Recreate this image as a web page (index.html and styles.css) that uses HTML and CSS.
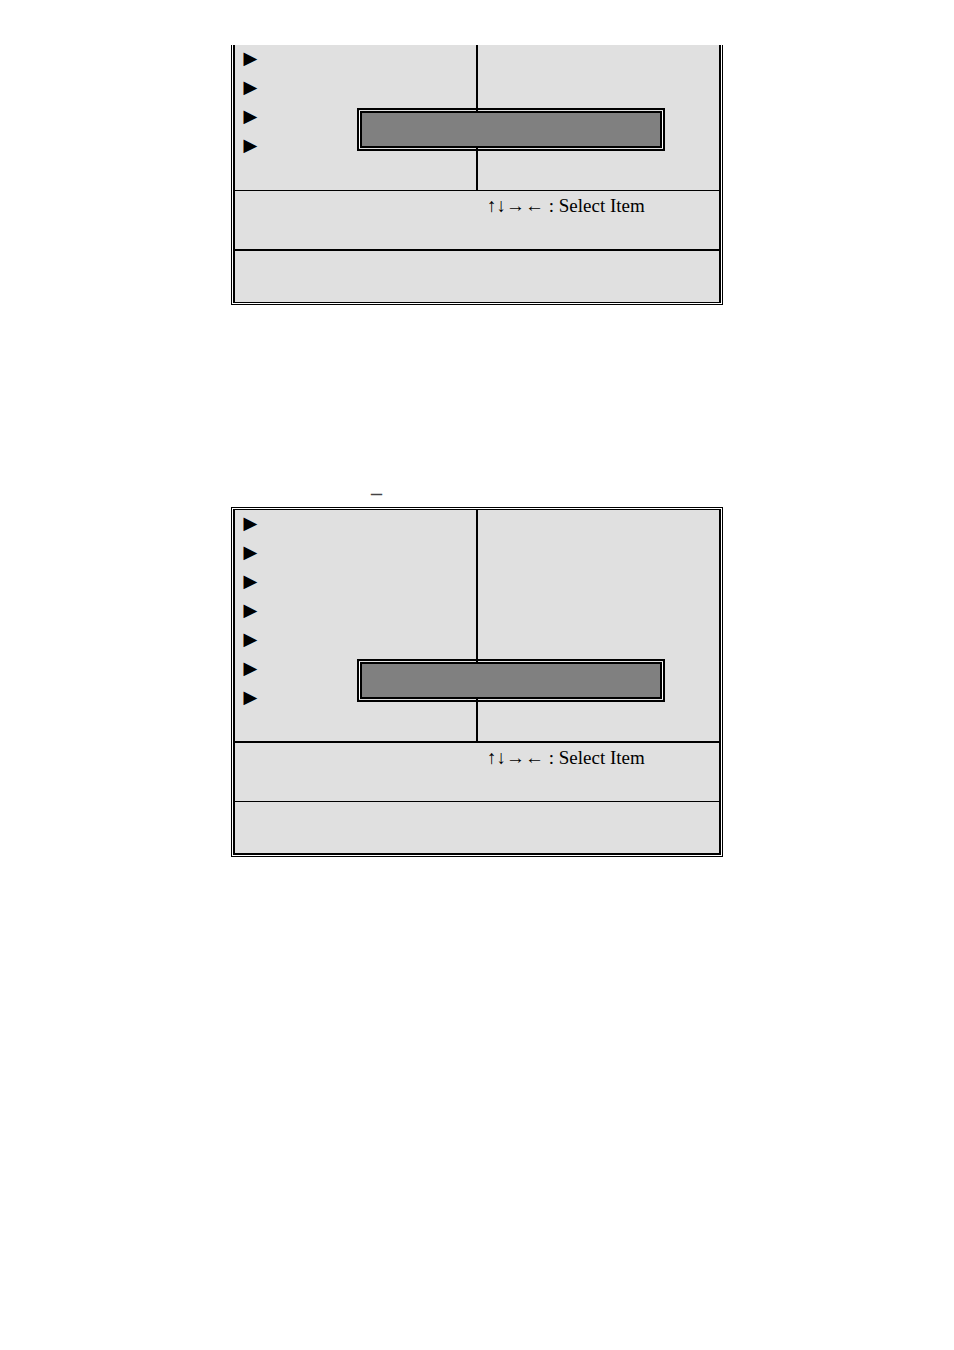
FILE: index.html
```
<!DOCTYPE html>
<html lang="en">
<head>
  <meta charset="UTF-8" />
  <meta name="viewport" content="width=device-width, initial-scale=1.0"/>
  <title>Setup Menu</title>
  <link rel="stylesheet" href="styles.css">
</head>
<body>

  <main class="page">

    <!-- End of the previous menu -->
    <section class="frame frame-continued">
      <div class="screen">
        <div class="menu">
          <ul class="menu-list">
            <li>►</li>
            <li>►</li>
            <li>►</li>
            <li>►</li>
          </ul>
          <div class="menu-side"></div>
          <div class="dialog"><div class="dialog-body"></div></div>
        </div>
        <div class="keys">
          <p>↑↓→← : Select Item</p>
        </div>
        <div class="footer thick"></div>
      </div>
    </section>

    <p class="caption">–</p>

    <section class="frame">
      <div class="screen">
        <div class="menu">
          <ul class="menu-list">
            <li>►</li>
            <li>►</li>
            <li>►</li>
            <li>►</li>
            <li>►</li>
            <li>►</li>
            <li>►</li>
          </ul>
          <div class="menu-side"></div>
          <div class="dialog"><div class="dialog-body"></div></div>
        </div>
        <div class="keys thick">
          <p>↑↓→← : Select Item</p>
        </div>
        <div class="footer"></div>
      </div>
    </section>

  </main>

</body>
</html>
```
FILE: styles.css
```
* {
  margin: 0;
  padding: 0;
}

body {
  font-family: "Liberation Serif", "Times New Roman", serif;
  font-size: 19px;
  line-height: 29px;
  color: #000;
  background: #fff;
}

.page {
  max-width: 492px;
  margin: 0 auto;
  padding: 45px 0;
}

/* Double outline: thin line, white gap, thick line */
.frame {
  border: 1px solid #000;
  padding: 1px;
}

.screen {
  border: 2px solid #000;
  border-top-width: 1px;
  background: #e0e0e0;
}

.frame-continued {
  border-top: none;
  padding-top: 0;
}

.frame-continued .screen {
  border-top: none;
  border-bottom-width: 1px;
}

/* Menu area */
.menu {
  display: flex;
  position: relative;
}

.menu-list {
  flex: 1 1 0;
  list-style: none;
  padding-bottom: 28px;
  border-right: 2px solid #000;
}

.frame-continued .menu-list {
  padding-bottom: 29px;
}

.menu-list li {
  height: 29px;
  padding-left: 4px;
  font-size: 23px;
  line-height: 27px;
}

.menu-side {
  flex: 1 1 0;
}

/* Message box over the menu */
.dialog {
  position: absolute;
  left: 122px;
  right: 54px;
  bottom: 39px;
  border: 2px solid #000;
  padding: 1px;
}

.dialog-body {
  height: 33px;
  border: 2px solid #000;
  background: #808080;
  box-shadow: -1px 0 #fff, 1px 0 #fff;
}

/* Key help and footer */
.keys {
  height: 58px;
  padding-left: 50%;
  border-top: 1px solid #000;
}

.keys p {
  padding-left: 10px;
}

.footer {
  height: 51px;
  border-top: 1px solid #000;
}

.thick {
  border-top-width: 2px;
}

.caption {
  margin-top: 173px;
  padding-left: 140px;
  font-size: 22px;
  font-weight: bold;
  color: #444;
}
```
